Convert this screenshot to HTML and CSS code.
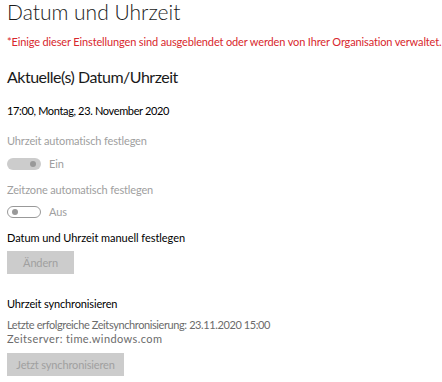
FILE: index.html
```html
<!DOCTYPE html>
<html>
<head>
  <title>Datum und Uhrzeit</title>
  <link rel="stylesheet" href="styles.css">
</head>
<body>
  <h1 class="page-title">Datum und Uhrzeit</h1>
  <p class="policy-note">*Einige dieser Einstellungen sind ausgeblendet oder werden von Ihrer Organisation verwaltet.</p>

  <h2 class="section-title">Aktuelle(s) Datum/Uhrzeit</h2>
  <p class="current-time">17:00, Montag, 23. November 2020</p>

  <div class="setting">
    <p class="setting-label muted">Uhrzeit automatisch festlegen</p>
    <label class="toggle-row">
      <span class="toggle toggle-on"><span class="knob"></span></span>
      <span class="toggle-text">Ein</span>
    </label>
  </div>

  <div class="setting second">
    <p class="setting-label muted">Zeitzone automatisch festlegen</p>
    <label class="toggle-row">
      <span class="toggle toggle-off"><span class="knob"></span></span>
      <span class="toggle-text">Aus</span>
    </label>
  </div>

  <div class="setting manual">
    <p class="setting-label">Datum und Uhrzeit manuell festlegen</p>
    <button class="btn btn-change" disabled>Ändern</button>
  </div>

  <div class="setting sync">
    <p class="setting-label">Uhrzeit synchronisieren</p>
    <div class="sync-info">
      <p class="last-sync">Letzte erfolgreiche Zeitsynchronisierung: 23.11.2020 15:00</p>
      <p class="time-server">Zeitserver: time.windows.com</p>
    </div>
    <button class="btn btn-sync" disabled>Jetzt synchronisieren</button>
  </div>
</body>
</html>
```

FILE: styles.css
```css
body {
  margin: 0;
  padding: 0 7px;
  font-family: Lato, "Noto Sans", sans-serif;
  font-size: 11px;
  line-height: 14px;
  letter-spacing: -0.15px;
  color: #000;
  background: #fff;
}
p {
  margin: 0;
}
.page-title {
  margin: 0;
  font-size: 21px;
  font-weight: 300;
  line-height: 24px;
  letter-spacing: 0;
  color: #1a1a1a;
}
.policy-note {
  margin-top: 11px;
  white-space: nowrap;
  letter-spacing: -0.14px;
  color: #d8272d;
}
.section-title {
  margin: 18px 0 0;
  font-size: 16px;
  font-weight: 400;
  line-height: 20px;
  letter-spacing: -0.5px;
  color: #1a1a1a;
}
.current-time {
  margin-top: 17px;
  letter-spacing: -0.35px;
}
.setting {
  margin-top: 16px;
}
.setting.second {
  margin-top: 12px;
}
.muted {
  color: #a0a0a0;
}
.toggle-row {
  display: flex;
  align-items: center;
  gap: 8px;
  margin-top: 9px;
  height: 14px;
}
.second .toggle-row {
  margin-top: 8px;
}
.toggle {
  position: relative;
  box-sizing: border-box;
  width: 34px;
  height: 12px;
  border-radius: 6px;
}
.toggle-on {
  background: #cccccc;
}
.toggle-off {
  border: 1.5px solid #999;
}
.knob {
  position: absolute;
  top: 50%;
  width: 6px;
  height: 6px;
  margin-top: -3px;
  border-radius: 50%;
}
.toggle-on .knob {
  right: 5px;
  background: #999;
}
.toggle-off .knob {
  left: 3.5px;
  background: #999;
}
.toggle-text {
  color: #a0a0a0;
}
.manual {
  margin-top: 12px;
}
.manual .setting-label {
  letter-spacing: -0.05px;
}
.btn {
  display: block;
  margin-top: 6px;
  padding: 0;
  height: 23px;
  border: 0;
  background: #cccccc;
  color: #a0a0a0;
  font-family: inherit;
  font-size: 11px;
  line-height: 23px;
  letter-spacing: -0.15px;
}
.btn-change {
  width: 67px;
}
.sync {
  margin-top: 23px;
}
.sync-info {
  margin-top: 7px;
  line-height: 13.5px;
  color: #6b6b6b;
}
.last-sync {
  letter-spacing: -0.4px;
}
.time-server {
  letter-spacing: 0.4px;
}
.btn-sync {
  margin-top: 8px;
  width: 117px;
}
```
